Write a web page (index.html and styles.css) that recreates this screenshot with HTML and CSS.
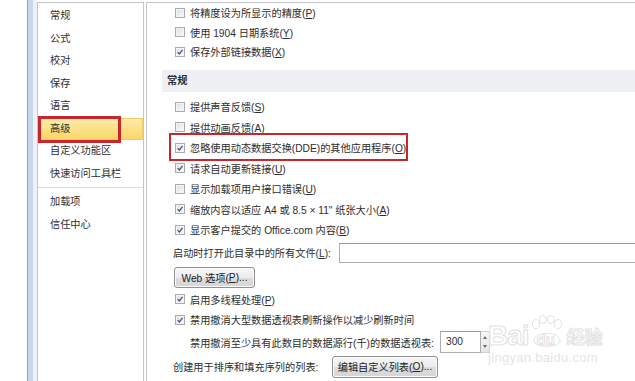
FILE: index.html
```html
<!DOCTYPE html>
<html lang="zh-CN">
<head>
    <meta charset="UTF-8">
    <title>Excel 选项 - 高级</title>
    <link rel="stylesheet" href="styles.css">
</head>
<body>
    <div class="window">
        <div class="edge"></div>

        <nav class="sidebar">
            <div class="nav-item">常规</div>
            <div class="nav-item">公式</div>
            <div class="nav-item">校对</div>
            <div class="nav-item">保存</div>
            <div class="nav-item">语言</div>
            <div class="nav-item active">高级</div>
            <div class="nav-item">自定义功能区</div>
            <div class="nav-item">快速访问工具栏</div>
            <div class="nav-sep"></div>
            <div class="nav-item">加载项</div>
            <div class="nav-item">信任中心</div>
        </nav>

        <main class="content">
            <div class="group top">
                <div class="row"><span class="cb"></span><span>将精度设为所显示的精度(<u>P</u>)</span></div>
                <div class="row"><span class="cb"></span><span>使用 1904 日期系统(<u>Y</u>)</span></div>
                <div class="row"><span class="cb on"><svg viewBox="0 0 10 10"><path d="M2 5.2 L4.2 7.4 L8.2 2.4"/></svg></span><span>保存外部链接数据(<u>X</u>)</span></div>
            </div>

            <div class="section-title">常规</div>

            <div class="group general">
                <div class="row"><span class="cb"></span><span>提供声音反馈(<u>S</u>)</span></div>
                <div class="row"><span class="cb"></span><span>提供动画反馈(<u>A</u>)</span></div>
                <div class="row marked"><span class="cb on"><svg viewBox="0 0 10 10"><path d="M2 5.2 L4.2 7.4 L8.2 2.4"/></svg></span><span>忽略使用动态数据交换(DDE)的其他应用程序(<u>O</u>)</span></div>
                <div class="row"><span class="cb on"><svg viewBox="0 0 10 10"><path d="M2 5.2 L4.2 7.4 L8.2 2.4"/></svg></span><span>请求自动更新链接(<u>U</u>)</span></div>
                <div class="row"><span class="cb"></span><span>显示加载项用户接口错误(<u>U</u>)</span></div>
                <div class="row"><span class="cb on"><svg viewBox="0 0 10 10"><path d="M2 5.2 L4.2 7.4 L8.2 2.4"/></svg></span><span>缩放内容以适应 A4 或 8.5 × 11" 纸张大小(<u>A</u>)</span></div>
                <div class="row"><span class="cb on"><svg viewBox="0 0 10 10"><path d="M2 5.2 L4.2 7.4 L8.2 2.4"/></svg></span><span>显示客户提交的 Office.com 内容(<u>B</u>)</span></div>

                <div class="row field">
                    <span class="label startup">启动时打开此目录中的所有文件(<u>L</u>):</span>
                    <span class="textbox wide"></span>
                </div>
                <div class="row btn-row">
                    <span class="button web">Web 选项(<u>P</u>)...</span>
                </div>

                <div class="row"><span class="cb on"><svg viewBox="0 0 10 10"><path d="M2 5.2 L4.2 7.4 L8.2 2.4"/></svg></span><span>启用多线程处理(<u>P</u>)</span></div>
                <div class="row"><span class="cb on"><svg viewBox="0 0 10 10"><path d="M2 5.2 L4.2 7.4 L8.2 2.4"/></svg></span><span>禁用撤消大型数据透视表刷新操作以减少刷新时间</span></div>

                <div class="row field indent">
                    <span class="label rows">禁用撤消至少具有此数目的数据源行(千)的数据透视表:</span>
                    <span class="textbox num">300</span>
                    <span class="spinner">
                        <svg viewBox="0 0 8 20"><path d="M2 7 L4 4 L6 7Z M2 13 L4 16 L6 13Z"/></svg>
                    </span>
                </div>
                <div class="row field">
                    <span class="label lists">创建用于排序和填充序列的列表:</span>
                    <span class="button edit">编辑自定义列表(<u>O</u>)...</span>
                </div>
            </div>
        </main>
    </div>

    <div class="watermark">
        <div class="wm-logo">
            <span class="wm-bai">Bai</span>
            <span class="wm-paw">
                <svg viewBox="0 0 36 34">
                    <ellipse cx="7" cy="9" rx="3.5" ry="4.5"/>
                    <ellipse cx="14" cy="4.5" rx="3.5" ry="4"/>
                    <ellipse cx="22" cy="4.5" rx="3.5" ry="4"/>
                    <ellipse cx="29" cy="9" rx="3.5" ry="4.5"/>
                    <path d="M5 26 C5 16 31 16 31 26 C31 33 5 33 5 26Z"/>
                </svg>
                <span class="wm-du">du</span>
            </span>
            <span class="wm-jy">经验</span>
        </div>
        <div class="wm-url">jingyan.baidu.com</div>
    </div>
</body>
</html>
```

FILE: styles.css
```css
:root {
    --text: #2e2e2e;
    --line: #c4c6c9;
    --band: #eef0f3;
    --red: #c8262c;
}
body {
    margin: 0;
    background: #fff;
    color: var(--text);
    font-family: "Liberation Sans", "Noto Sans CJK SC", sans-serif;
    font-size: 10.2px;
}
u { text-decoration-thickness: 1px; text-underline-offset: 1px; }

.window {
    display: flex;
    height: 381px;
    padding: 2px 0 0 27px;
    box-sizing: border-box;
    overflow: hidden;
}
.edge {
    width: 10px;
    margin-top: -2px;
    flex-shrink: 0;
    background: linear-gradient(to right, #8fa3bd 0 1px, #c6d7ec 1px 6px, #eef2f6 6px 10px);
}

/* left navigation */
.sidebar {
    width: 105px;
    flex-shrink: 0;
    border: 1px solid var(--line);
    border-bottom: 0;
    margin-right: 2px;
    padding-top: 2px;
}
.nav-item {
    position: relative;
    height: 22.5px;
    line-height: 22.5px;
    padding-left: 12px;
}
.nav-item.active {
    background: linear-gradient(#fdecaa, #fbd566);
    box-shadow: inset 0 0 0 1px #f0cc68;
}
.nav-item.active::after {
    content: "";
    position: absolute;
    left: 0;
    top: -2px;
    bottom: -3px;
    width: 77px;
    border: 3px solid var(--red);
}
.nav-sep {
    height: 6px;
    background: linear-gradient(transparent 2px, #dcdcdc 2px 3px, transparent 3px);
}

/* right options pane */
.content {
    flex: 1;
    border-left: 1px solid var(--line);
    border-top: 1px solid var(--line);
}
.row {
    display: flex;
    align-items: center;
    gap: 5px;
    height: 19.5px;
    padding-left: 28px;
    white-space: nowrap;
}
.general { margin-top: 4.5px; }
.general .row { height: 20.5px; }
.general .row.field { height: 25px; padding-left: 26px; gap: 0; }
.general .row.btn-row { height: 24px; padding-left: 27px; }
.general .row.indent { height: 24px; padding-left: 43px; }

.row.marked { position: relative; }
.row.marked::after {
    content: "";
    position: absolute;
    left: 22px;
    top: -4.5px;
    width: 235px;
    height: 24px;
    border: 2.5px solid var(--red);
}

.cb {
    width: 8px;
    height: 8px;
    flex-shrink: 0;
    border: 1px solid #a9abae;
    background: linear-gradient(135deg, #dcdde0, #fbfbfb);
    box-shadow: inset 0 0 0 1px #f4f4f4;
}
.cb svg { display: block; width: 8px; height: 8px; }
.cb svg path { fill: none; stroke: #41557c; stroke-width: 1.6; }

.section-title {
    margin: 8.5px 0 0 15px;
    height: 22px;
    line-height: 22px;
    padding-left: 5px;
    background: var(--band);
    font-weight: bold;
}

.label { flex-shrink: 0; }
.label.startup { width: 166px; }
.label.rows { width: 250px; }
.label.lists { width: 159px; }

.textbox {
    height: 18px;
    border: 1px solid #abadb3;
    border-top-color: #9c9ea4;
    background: #fff;
    box-sizing: content-box;
}
.textbox.wide { flex: 1; margin-right: -4px; }
.textbox.num {
    width: 34px;
    height: 20px;
    line-height: 20px;
    padding-left: 5px;
}
.spinner {
    width: 9px;
    height: 22px;
    border: 1px solid #cfd1d4;
    border-left: 0;
    box-sizing: border-box;
    background: linear-gradient(#f7f7f7, #e6e6e6);
}
.spinner svg { display: block; width: 8px; height: 20px; }
.spinner path { fill: #6a6a6a; }

.button {
    display: inline-flex;
    align-items: center;
    justify-content: center;
    height: 19px;
    border: 1px solid #8e8f8f;
    border-radius: 3px;
    background: linear-gradient(#f7f7f7 0%, #ececec 50%, #dcdcdc 51%, #d6d6d6 100%);
    box-shadow: inset 0 0 0 1px #fbfbfb;
    color: #222;
}
.button.web { width: 79px; }
.button.edit { width: 104px; height: 20px; }

/* faint site watermark over the corner */
.watermark {
    position: absolute;
    left: 488px;
    top: 311px;
    color: #fff;
    -webkit-text-stroke: 1px #e2e2e2;
    pointer-events: none;
}
.wm-logo { display: flex; align-items: flex-end; height: 40px; }
.wm-bai {
    font-family: "Liberation Sans", sans-serif;
    font-weight: bold;
    font-size: 28px;
    line-height: 30px;
    letter-spacing: -1px;
}
.wm-paw { position: relative; width: 36px; height: 36px; margin: 0 2px 0 0; }
.wm-paw svg { display: block; width: 36px; height: 34px; }
.wm-paw svg * { fill: none; stroke: #e2e2e2; stroke-width: 1; }
.wm-du {
    position: absolute;
    left: 8px;
    top: 17px;
    font-family: "Liberation Sans", sans-serif;
    font-weight: bold;
    font-size: 15px;
    line-height: 15px;
}
.wm-jy {
    font-family: "Noto Sans CJK SC", sans-serif;
    font-weight: bold;
    font-size: 18px;
    line-height: 22px;
    margin-bottom: 4px;
}
.wm-url {
    font-family: "Liberation Sans", sans-serif;
    font-size: 13px;
    line-height: 14px;
    -webkit-text-stroke: 0;
    color: #e5e5e5;
    letter-spacing: 0.3px;
}
```
